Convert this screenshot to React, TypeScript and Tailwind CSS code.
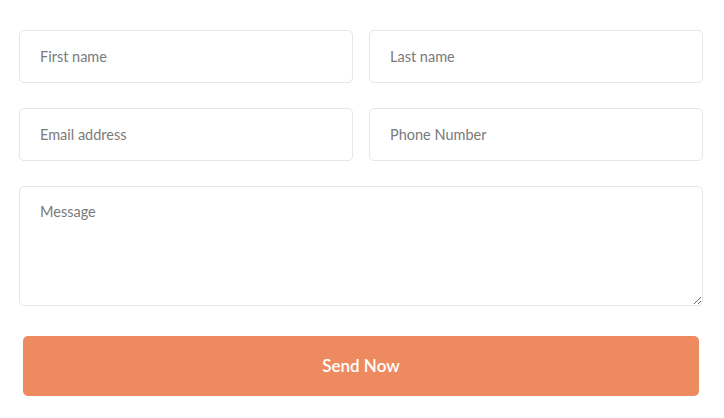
export default function App() {
  const inputCls =
    "h-[53px] w-full rounded-[5px] border border-[#e6e6e6] bg-white px-5 text-[14.5px] text-[#555] outline-none placeholder:text-[#7a7a7a]";
  return (
    <div
      className="min-h-[418px] w-[724px] bg-white pt-[30px] pl-[19px]"
      style={{ fontFamily: "Lato, 'Open Sans', sans-serif" }}
    >
      <form className="flex w-[684px] flex-col" onSubmit={(e) => e.preventDefault()}>
        <div className="grid grid-cols-2 gap-x-[16px] gap-y-[25px]">
          <input className={inputCls} placeholder="First name" />
          <input className={inputCls} placeholder="Last name" />
          <input className={inputCls} placeholder="Email address" />
          <input className={inputCls} placeholder="Phone Number" />
        </div>
        <textarea
          className="mt-[25px] h-[120px] w-full rounded-[5px] border border-[#e6e6e6] bg-white px-5 pt-[14px] text-[14.5px] text-[#555] outline-none placeholder:text-[#7a7a7a]"
          placeholder="Message"
        />
        <div className="px-[4px] pt-[30px]">
          <button
            type="submit"
            className="h-[60px] w-full rounded-[5px] bg-[#ee8a60] text-[17px] font-semibold text-white"
          >
            Send Now
          </button>
        </div>
      </form>
    </div>
  );
}
